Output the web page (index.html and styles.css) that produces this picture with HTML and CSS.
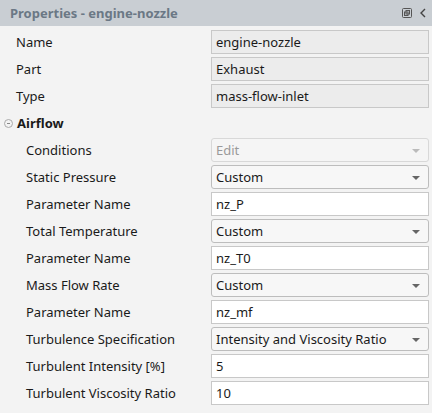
FILE: index.html
```html
<!DOCTYPE html>
<html lang="en">
<head>
	<meta charset="UTF-8">
	<title>Properties - engine-nozzle</title>
	<link rel="stylesheet" href="styles.css">
</head>
<body>
	<section class="panel">
		<header class="panel-head">
			<h1>Properties - engine-nozzle</h1>
			<div class="head-icons">
				<svg class="ico-float" width="10" height="10" viewBox="0 0 10 10">
					<rect x="0.5" y="0.5" width="9" height="9" rx="1" fill="none" stroke="#555" stroke-width="1"/>
					<rect x="4" y="2.5" width="3.5" height="3.5" fill="none" stroke="#555" stroke-width="1"/>
					<rect x="2.5" y="4" width="3.5" height="3.5" fill="none" stroke="#555" stroke-width="1"/>
				</svg>
				<svg class="ico-collapse" width="6" height="10" viewBox="0 0 6 10">
					<path d="M5 1 L1 5 L5 9" fill="none" stroke="#444" stroke-width="1.4"/>
				</svg>
			</div>
		</header>
		<div class="props">
			<div class="row">
				<span class="label">Name</span>
				<span class="field readonly">engine-nozzle</span>
			</div>
			<div class="row">
				<span class="label">Part</span>
				<span class="field readonly">Exhaust</span>
			</div>
			<div class="row">
				<span class="label">Type</span>
				<span class="field readonly">mass-flow-inlet</span>
			</div>

			<div class="group">
				<span class="toggle"></span>
				<span class="group-name">Airflow</span>
			</div>

			<div class="row sub">
				<span class="label">Conditions</span>
				<span class="field combo disabled">Edit<i class="arrow"></i></span>
			</div>
			<div class="row sub">
				<span class="label">Static Pressure</span>
				<span class="field combo">Custom<i class="arrow"></i></span>
			</div>
			<div class="row sub">
				<span class="label">Parameter Name</span>
				<span class="field text">nz_P</span>
			</div>
			<div class="row sub">
				<span class="label">Total Temperature</span>
				<span class="field combo">Custom<i class="arrow"></i></span>
			</div>
			<div class="row sub">
				<span class="label">Parameter Name</span>
				<span class="field text">nz_T0</span>
			</div>
			<div class="row sub">
				<span class="label">Mass Flow Rate</span>
				<span class="field combo">Custom<i class="arrow"></i></span>
			</div>
			<div class="row sub">
				<span class="label">Parameter Name</span>
				<span class="field text">nz_mf</span>
			</div>
			<div class="row sub">
				<span class="label">Turbulence Specification</span>
				<span class="field combo">Intensity and Viscosity Ratio<i class="arrow"></i></span>
			</div>
			<div class="row sub">
				<span class="label">Turbulent Intensity [%]</span>
				<span class="field text">5</span>
			</div>
			<div class="row sub">
				<span class="label">Turbulent Viscosity Ratio</span>
				<span class="field text">10</span>
			</div>
		</div>
	</section>
</body>
</html>
```

FILE: styles.css
```css
html, body {
	margin: 0;
	padding: 0;
	background: #f3f3f3;
}
body {
	font: 13px "Noto Sans", "Open Sans", sans-serif;
	color: #1a1a1a;
}
.panel {
	width: 432px;
	height: 413px;
	overflow: hidden;
}
.panel-head {
	align-items: center;
	background: #c9ced3;
	display: flex;
	height: 26px;
	justify-content: space-between;
	padding: 0 6px 0 10px;
	box-sizing: border-box;
}
.panel-head h1 {
	color: #6b7885;
	font: bold 13px "Noto Sans", sans-serif;
	margin: 0;
}
.head-icons {
	align-items: center;
	display: flex;
	gap: 8px;
}
.props {
	display: flex;
	flex-direction: column;
	gap: 3px;
	padding: 4px 3px 0 16px;
}
.row {
	align-items: center;
	display: flex;
	height: 24px;
}
.row.sub {
	padding-left: 10px;
}
.label {
	flex: none;
	width: 195px;
}
.row.sub .label {
	width: 185px;
}
.field {
	align-items: center;
	border: 1px solid #c8c8c8;
	box-sizing: border-box;
	display: flex;
	height: 24px;
	padding-left: 4px;
	position: relative;
	width: 218px;
}
.field.readonly {
	background: #ececec;
}
.field.text {
	background: #fff;
}
.field.combo {
	background: #f7f7f7;
	border-color: #bdbdbd;
	border-radius: 3px;
}
.field.disabled {
	color: #9a9a9a;
	border-color: #d8d8d8;
	background: #f5f5f5;
}
.arrow {
	border-left: 4px solid transparent;
	border-right: 4px solid transparent;
	border-top: 4px solid #666;
	height: 0;
	position: absolute;
	right: 8px;
	top: 10px;
	width: 0;
}
.field.disabled .arrow {
	border-top-color: #bbb;
}
.group {
	align-items: center;
	display: flex;
	height: 24px;
	margin-left: -12px;
}
.toggle {
	border: 1px solid #aaa;
	border-radius: 50%;
	box-sizing: border-box;
	height: 9px;
	margin-right: 4px;
	position: relative;
	width: 9px;
}
.toggle::after {
	background: #888;
	content: "";
	height: 1px;
	left: 2px;
	position: absolute;
	top: 3px;
	width: 3px;
}
.group-name {
	font-weight: bold;
	font-size: 13px;
}
```
